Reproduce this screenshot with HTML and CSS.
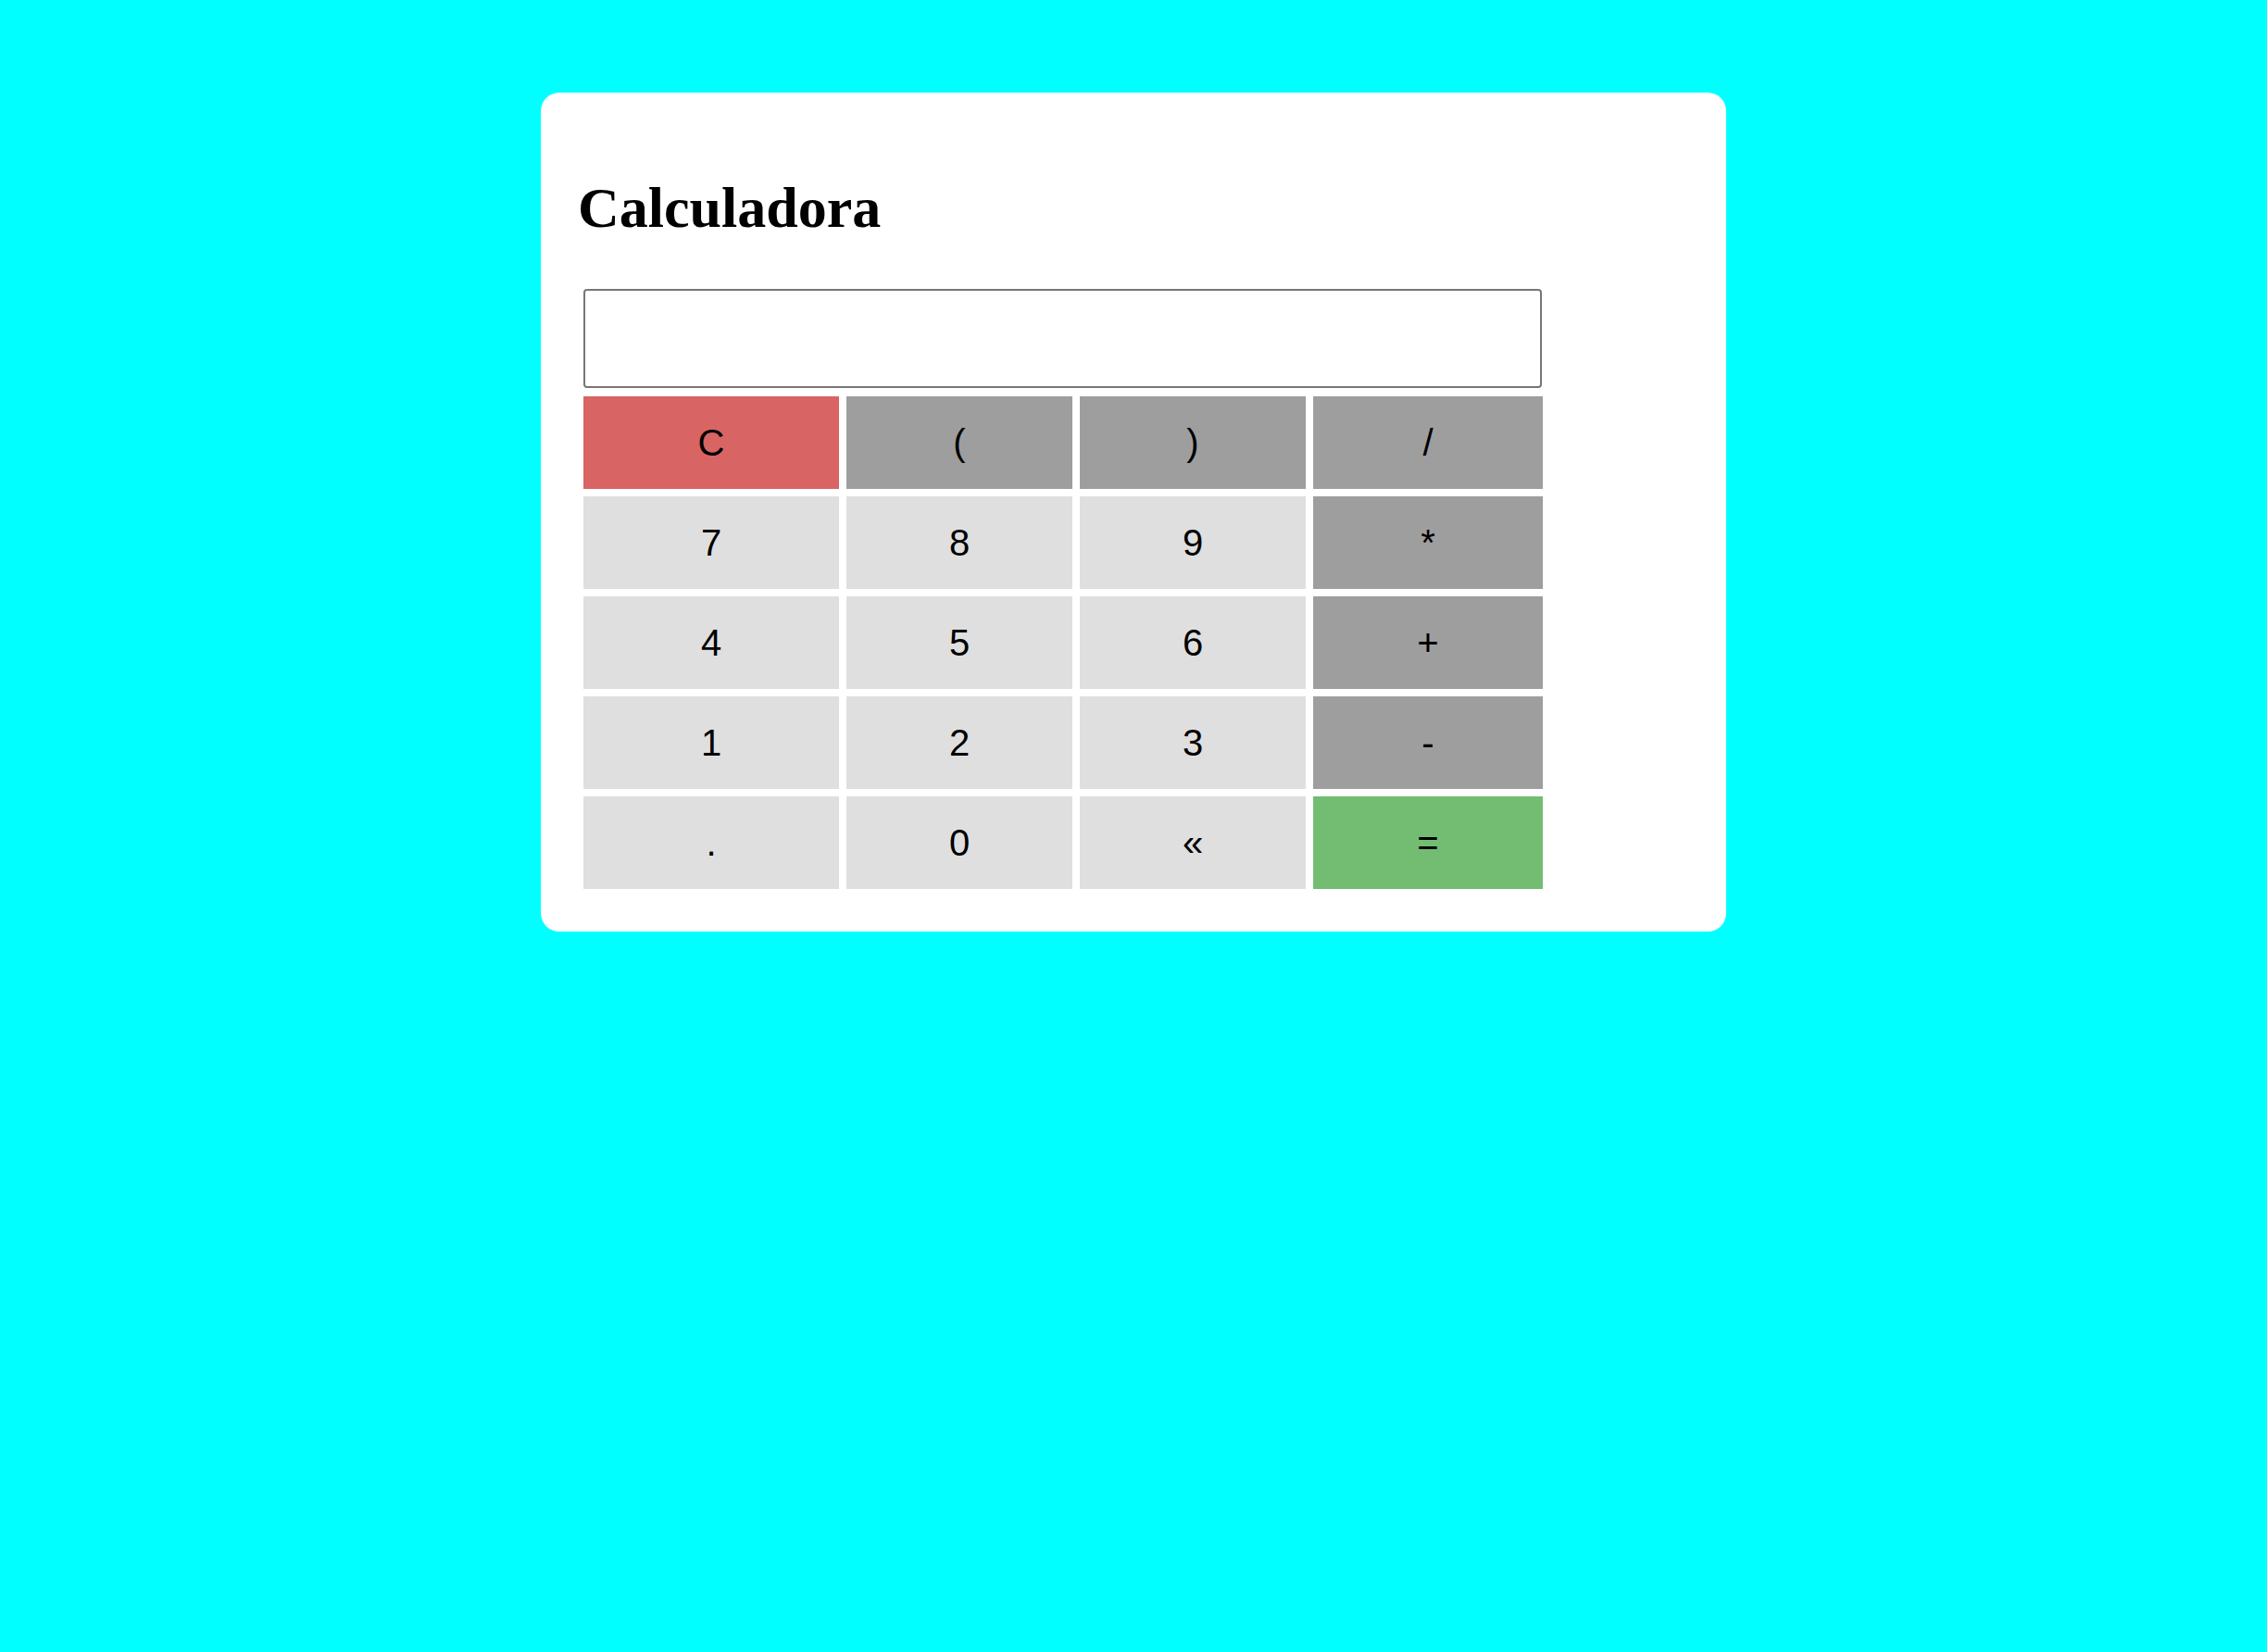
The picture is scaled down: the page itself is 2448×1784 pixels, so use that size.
FILE: index.html
```html
<!DOCTYPE html>
<html lang="es">
<head>
<meta charset="utf-8">
<title>Calculadora</title>
<link rel="stylesheet" href="styles.css">
</head>
<body>
<main class="card">
  <h1 class="title">Calculadora</h1>
  <div class="calc">
    <input class="display" type="text" value="">
    <div class="keys">
      <button class="key key-clear">C</button>
      <button class="key key-op">(</button>
      <button class="key key-op">)</button>
      <button class="key key-op">/</button>
      <button class="key">7</button>
      <button class="key">8</button>
      <button class="key">9</button>
      <button class="key key-op">*</button>
      <button class="key">4</button>
      <button class="key">5</button>
      <button class="key">6</button>
      <button class="key key-op">+</button>
      <button class="key">1</button>
      <button class="key">2</button>
      <button class="key">3</button>
      <button class="key key-op">-</button>
      <button class="key">.</button>
      <button class="key">0</button>
      <button class="key">&laquo;</button>
      <button class="key key-eq">=</button>
    </div>
  </div>
</main>
</body>
</html>
```
FILE: styles.css
```css
html, body {
  margin: 0;
  padding: 0;
}
body {
  background: #00ffff;
  min-height: 1784px;
  font-family: "Liberation Serif", "Times New Roman", serif;
}
.card {
  box-sizing: border-box;
  width: 1280px;
  height: 906px;
  margin: 100px auto 0;
  background: #ffffff;
  border-radius: 20px;
  padding: 93px 40px 46px;
}
.title {
  margin: 0;
  font-size: 62px;
  line-height: 62px;
  font-weight: bold;
  color: #000;
}
.calc {
  margin: 57px 0 0 6px;
  width: 1036px;
}
.display {
  box-sizing: border-box;
  display: block;
  width: 1035px;
  height: 107px;
  margin: 0 0 9px;
  border: 2px solid #767676;
  border-radius: 4px;
  background: #fff;
  font-family: "Liberation Sans", Arial, sans-serif;
  font-size: 40px;
  padding: 0 10px;
}
.keys {
  display: grid;
  grid-template-columns: 276px 244px 244px 248px;
  grid-auto-rows: 100px;
  gap: 8px;
}
.key {
  border: none;
  margin: 0;
  padding: 0;
  background: #dfdfdf;
  color: #000;
  font-family: "Liberation Sans", Arial, sans-serif;
  font-size: 40px;
  cursor: pointer;
}
.key-op {
  background: #9e9e9e;
}
.key-clear {
  background: #d96464;
}
.key-eq {
  background: #73bd73;
}
```
